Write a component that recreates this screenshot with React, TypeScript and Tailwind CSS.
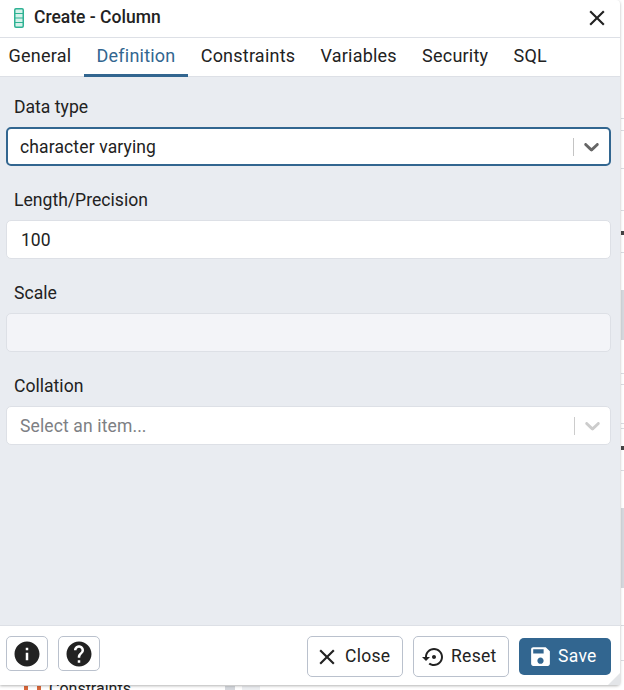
import React from 'react';

const TABS = ['General', 'Definition', 'Constraints', 'Variables', 'Security', 'SQL'];

// Material icon paths
const ICONS = {
  close: 'M19 6.41 17.59 5 12 10.59 6.41 5 5 6.41 10.59 12 5 17.59 6.41 19 12 13.41 17.59 19 19 17.59 13.41 12z',
  info: 'M12 2C6.48 2 2 6.48 2 12s4.48 10 10 10 10-4.48 10-10S17.52 2 12 2zm1 15h-2v-6h2v6zm0-8h-2V7h2v2z',
  help: 'M12 2C6.48 2 2 6.48 2 12s4.48 10 10 10 10-4.48 10-10S17.52 2 12 2zm1 17h-2v-2h2v2zm2.07-7.75l-.9.92C13.45 12.9 13 13.5 13 15h-2v-.5c0-1.1.45-2.1 1.17-2.83l1.24-1.26c.37-.36.59-.86.59-1.41 0-1.1-.9-2-2-2s-2 .9-2 2H8c0-2.21 1.79-4 4-4s4 1.79 4 4c0 .88-.36 1.68-.93 2.25z',
  save: 'M17 3H5c-1.11 0-2 .9-2 2v14c0 1.1.89 2 2 2h14c1.1 0 2-.9 2-2V7l-4-4zm-5 16c-1.66 0-3-1.34-3-3s1.34-3 3-3 3 1.34 3 3-1.34 3-3 3zm3-10H5V5h10v4z',
  reset: 'M14 12c0-1.1-.9-2-2-2s-2 .9-2 2 .9 2 2 2 2-.9 2-2zm-2-9c-4.97 0-9 4.03-9 9H0l4 4 4-4H5c0-3.87 3.13-7 7-7s7 3.13 7 7-3.13 7-7 7c-1.51 0-2.91-.49-4.06-1.3l-1.42 1.44C8.04 20.3 9.94 21 12 21c4.97 0 9-4.03 9-9s-4.03-9-9-9z',
};

const Icon: React.FC<{ d: string; className: string }> = ({ d, className }) => (
  <svg viewBox="0 0 24 24" fill="currentColor" className={className} aria-hidden="true">
    <path d={d} />
  </svg>
);

const Chevron: React.FC<{ className: string }> = ({ className }) => (
  <svg viewBox="0 0 20 20" fill="currentColor" className={className} aria-hidden="true">
    <path d="M4.516 7.548c0.436-0.446 1.043-0.481 1.576 0l3.908 3.747 3.908-3.747c0.533-0.481 1.141-0.446 1.574 0 0.436 0.445 0.408 1.197 0 1.615-0.406 0.418-4.695 4.502-4.695 4.502-0.217 0.223-0.502 0.335-0.787 0.335s-0.57-0.112-0.789-0.335c0 0-4.287-4.084-4.695-4.502s-0.436-1.17 0-1.615z" />
  </svg>
);

const ColumnIcon = () => (
  <svg viewBox="0 0 10 20" className="w-[10px] h-[20px]" aria-hidden="true">
    <rect x="0.75" y="0.75" width="8.5" height="18.5" rx="1.2" fill="#d5f2ea" stroke="#2fb294" strokeWidth="1.5" />
    <path d="M1 5.5h8M1 10h8M1 14.5h8" stroke="#2fb294" strokeWidth="1.2" />
  </svg>
);

const Field: React.FC<{ label: string; children: React.ReactNode }> = ({ label, children }) => (
  <div className="mb-[23px]">
    <div className="h-[24px] mb-[7px] px-[8px] text-[17.6px] leading-[23.5px] text-[#222222]">{label}</div>
    {children}
  </div>
);

const Select: React.FC<{ value?: string; placeholder?: string; focused?: boolean }> = ({ value, placeholder, focused }) => (
  <div
    className={`flex items-center h-[39px] rounded-[5px] bg-white ${
      focused ? 'border-2 border-[#326690] pl-[12px]' : 'border border-[#dde0e6] pl-[13px]'
    }`}
  >
    <span className={`flex-1 pt-[2px] text-[17.5px] tracking-[0.13px] ${value ? 'text-[#222222]' : 'text-[#7d8084]'}`}>
      {value ?? placeholder}
    </span>
    <span className={`w-px h-[18px] ${focused ? 'bg-[#c4c4c4]' : 'bg-[#cccccc]'}`} />
    <span className="flex justify-center w-[35px]">
      <Chevron className={`w-[25px] h-[25px] ${focused ? 'text-[#666666]' : 'text-[#cccccc]'}`} />
    </span>
  </div>
);

const SquareButton: React.FC<{ d: string }> = ({ d }) => (
  <button className="flex items-center justify-center w-[42px] h-[35px] rounded-[5px] border border-[#bac1cd] bg-white text-[#222222]">
    <Icon d={d} className="w-[30px] h-[30px]" />
  </button>
);

const FooterButton: React.FC<{ d: string; label: string; boxClass: string; iconClass: string }> = ({ d, label, boxClass, iconClass }) => (
  <button className={`flex items-center w-[96px] h-[41px] rounded-[5px] border border-[#bac1cd] bg-white text-[17.5px] tracking-[0.3px] text-[#222222] ${boxClass}`}>
    <Icon d={d} className={iconClass} />
    {label}
  </button>
);

// What shows of the page behind the dialog, along the right and bottom edges
const LINES = [118, 130, 168, 210, 252, 373, 384, 423, 428, 470, 625, 660];
const BAND_TOPS = [
  { top: 290, height: 50 },
  { top: 508, height: 80 },
];

const Backdrop = () => (
  <>
    {LINES.map(y => (
      <div key={y} className="absolute left-[621px] w-[3px] h-px bg-[#d9dce1]" style={{ top: y }} />
    ))}
    {BAND_TOPS.map(b => (
      <div key={b.top} className="absolute left-[621px] w-[3px] bg-[#d5d8dd]" style={{ top: b.top, height: b.height }} />
    ))}
    <div className="absolute left-[621px] top-[231px] w-[3px] h-[4px] bg-[#444444]" />
    <div className="absolute left-[621px] top-[446px] w-[3px] h-[4px] bg-[#444444]" />
    <div className="absolute left-[24px] top-[686px] w-[4px] h-[4px] bg-[#d9673a]" />
    <div className="absolute left-[37px] top-[686px] w-[4px] h-[4px] bg-[#d9673a]" />
    <div className="absolute left-[49px] top-[679px] text-[16px] leading-[20px] text-[#222222]">Constraints</div>
    <div className="absolute left-[225px] top-[686px] w-[10px] h-[4px] bg-[#d5d8dd]" />
    <div className="absolute left-[242px] top-[686px] w-[18px] h-[4px] bg-[#eceef1]" />
  </>
);

export default function App() {
  return (
    <div
      className="relative w-[624px] h-[690px] overflow-hidden bg-white"
      style={{ fontFamily: 'Roboto, "Liberation Sans", sans-serif' }}
    >
      <Backdrop />
      <div className="absolute left-0 top-0 w-[620px] h-[685px] flex flex-col bg-white rounded-r-[4px] shadow-[0_1px_3px_rgba(0,0,0,0.3)]">
        {/* Title bar */}
        <div className="flex items-center h-[38px] shrink-0 border-b border-[#dde0e6] pl-[14px] pr-[10px] pb-[2px]">
          <ColumnIcon />
          <span className="ml-[10px] flex-1 text-[17.5px] font-medium text-[#222222]">Create - Column</span>
          <Icon d={ICONS.close} className="w-[26px] h-[26px] text-[#222222]" />
        </div>

        {/* Tabs */}
        <div className="flex h-[39px] shrink-0 border-b border-[#dde0e6] -ml-[4px]">
          {TABS.map(tab => (
            <div
              key={tab}
              className={`px-[12.6px] text-[18px] tracking-[0.22px] leading-[36px] ${
                tab === 'Definition' ? 'text-[#326690] border-b-[3px] border-[#326690] h-[39px]' : 'text-[#222222]'
              }`}
            >
              {tab}
            </div>
          ))}
        </div>

        {/* Form */}
        <div className="flex-1 bg-[#e9ecf1] pt-[19px] pl-[6px] pr-[9px]">
          <Field label="Data type">
            <Select value="character varying" focused />
          </Field>
          <Field label="Length/Precision">
            <div className="flex items-center h-[39px] rounded-[5px] border border-[#dde0e6] bg-white pl-[14px] pt-[2px] text-[17.5px] text-[#222222]">
              100
            </div>
          </Field>
          <Field label="Scale">
            <div className="h-[39px] rounded-[5px] border border-[#dde0e6] bg-[#f3f4f8]" />
          </Field>
          <Field label="Collation">
            <Select placeholder="Select an item..." />
          </Field>
        </div>

        {/* Footer */}
        <div className="relative flex items-start h-[60px] shrink-0 border-t border-[#dde0e6] pt-[10px] pl-[6px] pr-[9px]">
          <SquareButton d={ICONS.info} />
          <div className="ml-[10px]">
            <SquareButton d={ICONS.help} />
          </div>
          <div className="ml-auto flex gap-[10px]">
            <FooterButton d={ICONS.close} label="Close" boxClass="pl-[6px] gap-[5px]" iconClass="w-[26px] h-[26px]" />
            <FooterButton d={ICONS.reset} label="Reset" boxClass="pl-[8px] gap-[5px]" iconClass="w-[24px] h-[24px]" />
            <button className="flex items-center pl-[9px] gap-[5px] w-[92px] h-[37px] mt-[2px] rounded-[5px] bg-[#326690] text-[17.5px] tracking-[0.3px] text-white">
              <Icon d={ICONS.save} className="w-[25px] h-[25px]" />
              Save
            </button>
          </div>
          {/* Resize handle */}
          <svg viewBox="0 0 12 12" className="absolute right-0 bottom-0 w-[12px] h-[12px]" aria-hidden="true">
            <path d="M12 0V12H0z" fill="#e3e5e8" />
          </svg>
        </div>
      </div>
    </div>
  );
}
